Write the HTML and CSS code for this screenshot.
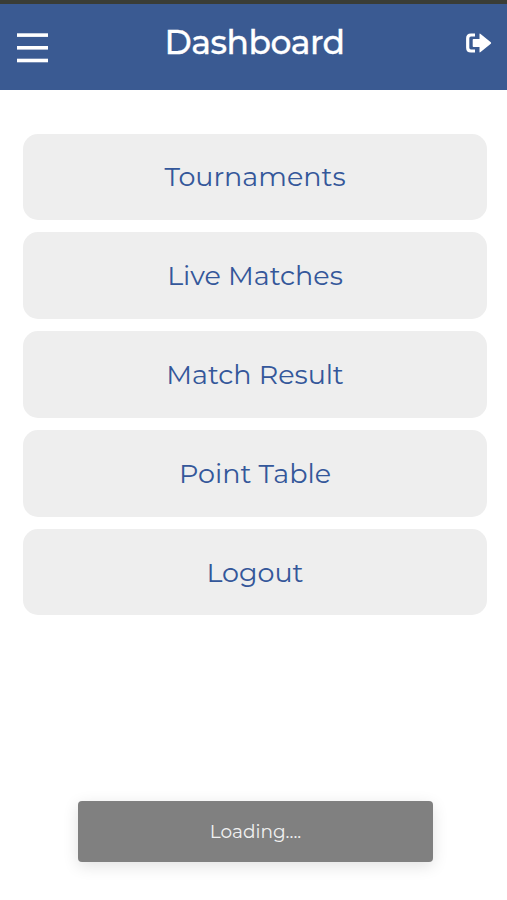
FILE: index.html
```html
<!DOCTYPE html>
<html lang="en">
<head>
    <meta charset="UTF-8">
    <meta name="viewport" content="width=device-width, initial-scale=1.0">
    <title>Dashboard</title>
    <link rel="stylesheet" href="styles.css">
</head>
<body>
    <!-- Top bar -->
    <header class="header">
        <button class="icon-btn menu-icon" aria-label="Menu">
            <svg width="31" height="30" viewBox="0 0 31 30" fill="#fff">
                <rect x="0" y="0.3" width="31" height="3.6"/>
                <rect x="0" y="13" width="31" height="3.6"/>
                <rect x="0" y="25.7" width="31" height="3.6"/>
            </svg>
        </button>
        <h1>Dashboard</h1>
        <button class="icon-btn logout-icon" aria-label="Logout">
            <svg width="27" height="20" viewBox="0 0 27 20">
                <path d="M10 2H6Q2.7 2 2.7 5.3V14.7Q2.7 18 6 18H10" fill="none" stroke="#fff" stroke-width="3.2"/>
                <path d="M8.5 6H14.5V1.2Q14.5 0 15.6 0.9L25.8 9.3Q26.6 10 25.8 10.7L15.6 19.1Q14.5 20 14.5 18.8V14H8.5Q7.7 14 7.7 13.2V6.8Q7.7 6 8.5 6Z" fill="#fff"/>
            </svg>
        </button>
    </header>

    <!-- Menu links -->
    <nav class="menu">
        <a href="#">Tournaments</a>
        <a href="#">Live Matches</a>
        <a href="#">Match Result</a>
        <a href="#">Point Table</a>
        <a href="#">Logout</a>
    </nav>

    <div class="toast">Loading....</div>
</body>
</html>
```
FILE: styles.css
```css
* {
    box-sizing: border-box;
}
body {
    margin: 0;
    min-height: 900px;
    background-color: #fff;
    font-family: Montserrat, Inter, "Liberation Sans", sans-serif;
}
.header {
    display: flex;
    justify-content: space-between;
    align-items: center;
    height: 90px;
    padding: 0 15px 0 17px;
    border-top: 4px solid #3a3d36;
    background-color: #3a5a92;
    color: #fff;
}
.header h1 {
    margin: 0 4px 10px 0;
    font-size: 33px;
    font-weight: 500;
    line-height: 40px;
    letter-spacing: -0.5px;
    -webkit-text-stroke: 0.3px #fff;
}
.icon-btn {
    padding: 0;
    border: none;
    background: none;
    cursor: pointer;
}
.icon-btn svg {
    display: block;
}
.menu-icon {
    margin-top: 2px;
}
.logout-icon {
    margin-bottom: 8px;
}
.menu {
    display: flex;
    flex-direction: column;
    gap: 12.3px;
    padding: 43.7px 20px 0 23px;
}
.menu a {
    display: flex;
    justify-content: center;
    align-items: center;
    height: 86.5px;
    border-radius: 15px;
    background-color: #eee;
    color: #34579a;
    font-size: 27px;
    text-decoration: none;
}
.toast {
    width: 355px;
    margin: 186px 0 0 78px;
    border-radius: 4px;
    background-color: #808080;
    box-shadow: 0 4px 16px rgba(0, 0, 0, 0.12);
    color: #f1f1f1;
    font-size: 18.5px;
    line-height: 61px;
    text-align: center;
}
```
